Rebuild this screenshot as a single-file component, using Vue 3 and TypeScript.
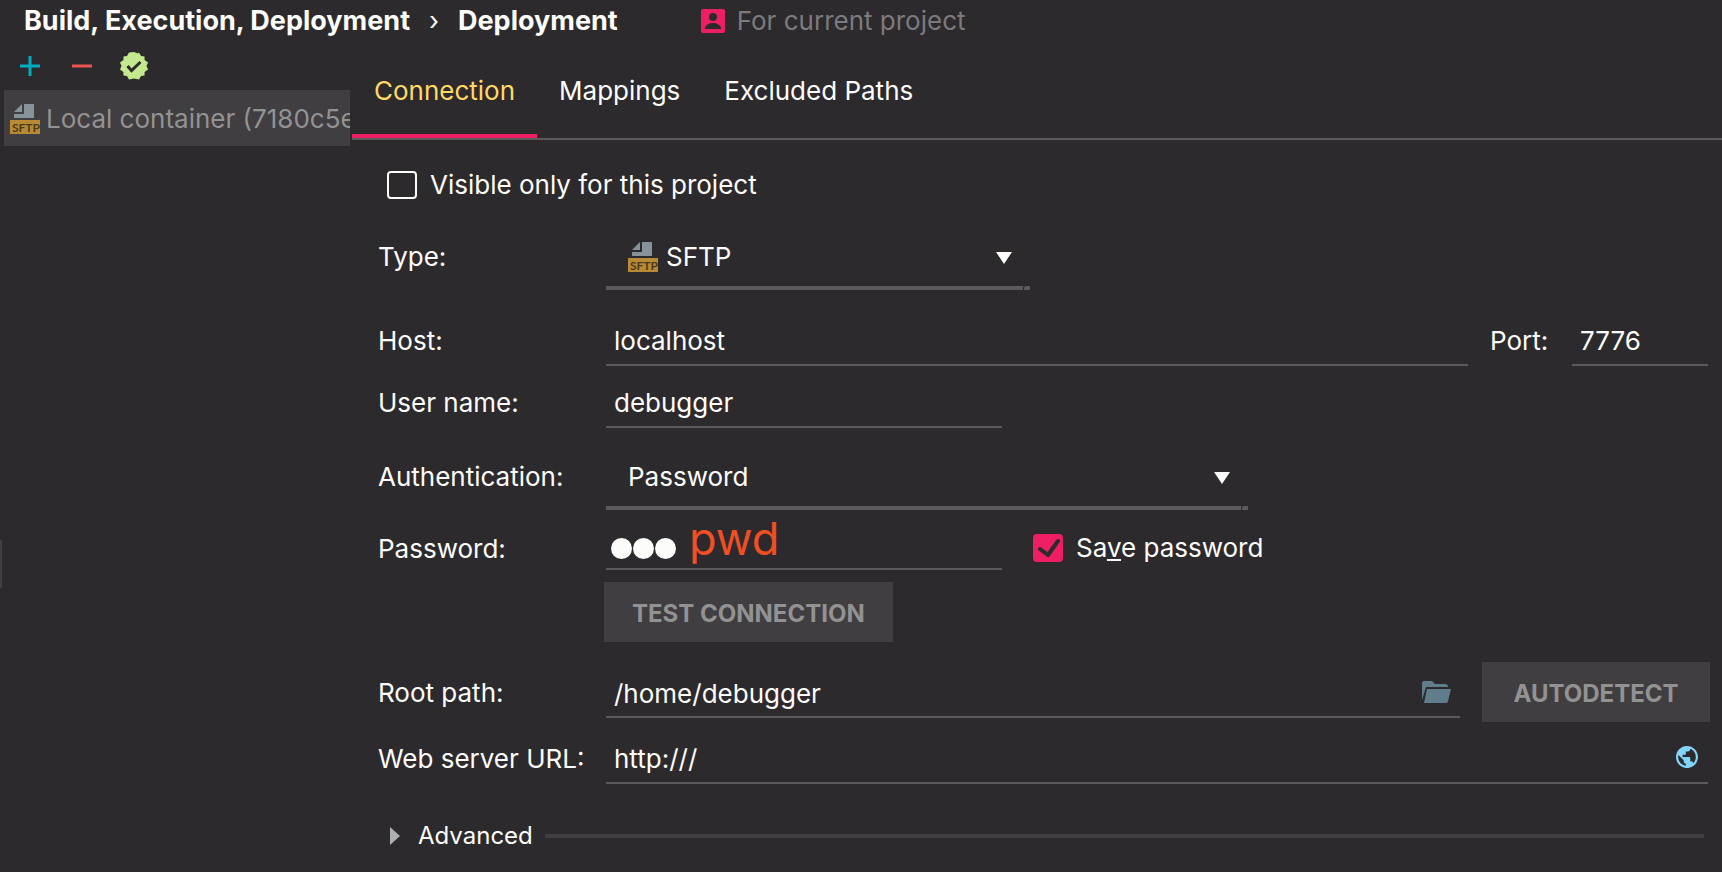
<script setup lang="ts">
import { ref } from 'vue'

const tabs = ['Connection', 'Mappings', 'Excluded Paths']
const activeTab = ref('Connection')
const onlyThisProject = ref(false)
const savePassword = ref(true)
const type = ref('SFTP')
const host = ref('localhost')
const port = ref('7776')
const user = ref('debugger')
const auth = ref('Password')
const password = ref('pwd')
const rootPath = ref('/home/debugger')
const url = ref('http:///')
</script>

<template>
  <div class="page">
    <header class="crumbs">
      <h1>Build, Execution, Deployment</h1>
      <span class="sep">›</span>
      <h1>Deployment</h1>
      <span class="scope">
        <svg width="24" height="24" viewBox="0 0 24 24" aria-hidden="true">
          <rect width="24" height="24" rx="2" fill="#ed1e63" />
          <circle cx="12" cy="8" r="4" fill="#2d2a2e" />
          <path d="M4 20v-1c0-3 5-5 8-5s8 2 8 5v1z" fill="#2d2a2e" />
        </svg>
        For current project
      </span>
    </header>

    <div class="body">
      <aside class="side">
        <div class="tools">
          <button type="button" aria-label="Add">
            <svg width="20" height="20" viewBox="0 0 20 20"><path d="M10 0v20M0 10h20" stroke="#00acc1" stroke-width="3" /></svg>
          </button>
          <button type="button" aria-label="Remove">
            <svg width="20" height="20" viewBox="0 0 20 20"><path d="M0 10h20" stroke="#ef5350" stroke-width="3" /></svg>
          </button>
          <button type="button" aria-label="Use as default">
            <svg width="28" height="28" viewBox="0 0 28 28">
              <path d="M14 0l4 1.500 1-1 2 3.400 3.500.6.100 3.500 3.400 2.500-1.500 3.500 1.500 3.500-3.400 2.500-.1 3.500-3.500.6-2 3.400-5-1-5 1-2-3.400-3.500-.6-.1-3.500L0 17.500 1.500 14 0 10.500 3.400 8l.1-3.500L7 3.900l2-3.400z" fill="#c3e88d" />
              <path d="M7.500 14l4 4.500 9-8.500" fill="none" stroke="#2d2a2e" stroke-width="3" />
            </svg>
          </button>
        </div>
        <button type="button" class="server">
          <svg width="30" height="30" viewBox="0 0 30 30" aria-hidden="true">
            <path d="M12 0v8H4zM14 0h10v14H4v-4h10z" fill="#87939a" />
            <rect y="16" width="30" height="14" fill="#b98a34" />
            <text x="2" y="28" class="tag">SFTP</text>
          </svg>
          <span>Local container (7180c5e</span>
        </button>
        <span class="handle"></span>
      </aside>

      <main class="main">
        <nav class="tabs" role="tablist">
          <button
            v-for="t in tabs"
            :key="t"
            type="button"
            role="tab"
            :aria-selected="t === activeTab"
            :class="{ active: t === activeTab }"
            @click="activeTab = t"
          >{{ t }}</button>
        </nav>

        <form class="form" @submit.prevent>
          <label class="check visible">
            <span class="box">
              <input v-model="onlyThisProject" type="checkbox" />
              <svg v-if="onlyThisProject" viewBox="0 0 30 28"><path d="M7 15l8 6L25 7" /></svg>
            </span>
            Visible only for this project
          </label>

          <div class="row">
            <label for="type">Type:</label>
            <div class="pick type">
              <svg class="lead" width="30" height="30" viewBox="0 0 30 30" aria-hidden="true">
                <path d="M12 0v8H4zM14 0h10v14H4v-4h10z" fill="#87939a" />
                <rect y="16" width="30" height="14" fill="#b98a34" />
                <text x="2" y="28" class="tag">SFTP</text>
              </svg>
              <select id="type" v-model="type"><option>SFTP</option></select>
              <svg class="arrow" width="16" height="12" viewBox="0 0 16 12"><path d="M0 0h16L8 12z" fill="#fcfcfa" /></svg>
            </div>
          </div>

          <div class="row">
            <label for="host">Host:</label>
            <input id="host" v-model="host" type="text" class="field grow" />
            <label for="port" class="port-label">Port:</label>
            <input id="port" v-model="port" type="text" class="field port" />
          </div>

          <div class="row user">
            <label for="user">User name:</label>
            <input id="user" v-model="user" type="text" class="field short" />
          </div>

          <div class="row auth-row">
            <label for="auth">Authentication:</label>
            <div class="pick auth">
              <select id="auth" v-model="auth"><option>Password</option></select>
              <svg class="arrow" width="16" height="12" viewBox="0 0 16 12"><path d="M0 0h16L8 12z" fill="#fcfcfa" /></svg>
            </div>
          </div>

          <div class="row password-row">
            <label for="password">Password:</label>
            <div class="secret short">
              <input id="password" v-model="password" type="password" class="field" />
              <span class="mask" aria-hidden="true">
                <i v-for="n in password.length" :key="n"></i>
                <span class="note">pwd</span>
              </span>
            </div>
            <label class="check save">
              <span class="box">
                <input v-model="savePassword" type="checkbox" />
                <svg v-if="savePassword" viewBox="0 0 30 28"><path d="M7 15l8 6L25 7" /></svg>
              </span>
              <span>Sa<u>v</u>e password</span>
            </label>
          </div>

          <button type="button" class="btn test">TEST CONNECTION</button>

          <div class="row root-row">
            <label for="root">Root path:</label>
            <div class="with-icon grow">
              <input id="root" v-model="rootPath" type="text" class="field tall" />
              <button type="button" class="inner folder" aria-label="Browse">
                <svg width="29" height="22" viewBox="0 0 29 22">
                  <path d="M0 19V2a2 2 0 0 1 2-2h8l3 3h10a3 3 0 0 1 3 3H4z" fill="#607d8b" />
                  <path d="M5 8h24l-3 12a2 2 0 0 1-2 2H2z" fill="#607d8b" />
                </svg>
              </button>
            </div>
            <button type="button" class="btn detect">AUTODETECT</button>
          </div>

          <div class="row url-row">
            <label for="url">Web server URL:</label>
            <div class="with-icon grow">
              <input id="url" v-model="url" type="text" class="field" />
              <button type="button" class="inner globe" aria-label="Open in browser">
                <svg width="22" height="22" viewBox="2 2 20 20">
                  <path d="M12 2C6.480 2 2 6.480 2 12s4.480 10 10 10 10-4.480 10-10S17.520 2 12 2zm-1 17.930c-3.950-.49-7-3.850-7-7.930 0-.62.080-1.210.21-1.790L9 15v1c0 1.100.9 2 2 2v1.930zm6.900-2.540c-.26-.81-1-1.390-1.900-1.390h-1v-3c0-.55-.45-1-1-1H8v-2h2c.55 0 1-.45 1-1V7h2c1.100 0 2-.9 2-2v-.41c2.930 1.190 5 4.060 5 7.410 0 2.080-.8 3.970-2.100 5.390z" fill="#81d4fa" />
                </svg>
              </button>
            </div>
          </div>

          <button type="button" class="advanced" aria-expanded="false">
            <svg width="10" height="18" viewBox="0 0 10 18"><path d="M0 0l10 9-10 9z" fill="#aeafb1" /></svg>
            <span class="name">Advanced</span>
            <span class="rule"></span>
          </button>
        </form>
      </main>
    </div>
  </div>
</template>

<style>
body {
  background: #2d2a2e;
}
</style>

<style scoped>
.page {
  min-height: 100vh;
  box-sizing: border-box;
  background: #2d2a2e;
  color: #fcfcfa;
  font: 400 26px/32px Inter, "Liberation Sans", sans-serif;
}
.page * {
  box-sizing: border-box;
}
button,
input,
select {
  margin: 0;
  padding: 0;
  border: 0;
  border-radius: 0;
  background: none;
  color: inherit;
  font: inherit;
  outline: 0;
}
svg {
  display: block;
  flex: none;
}
.tag {
  fill: #4b3a1e;
  font: 700 12px Lato, sans-serif;
}
.crumbs {
  display: flex;
  align-items: center;
  height: 42px;
  padding-left: 24px;
}
h1 {
  margin: 0;
  font-size: 27px;
  line-height: 32px;
  font-weight: 700;
}
.sep {
  width: 48px;
  text-align: center;
}
.scope {
  display: flex;
  align-items: center;
  gap: 12px;
  margin-left: 83px;
  color: #7c7a7d;
}
.body {
  display: flex;
}
.side {
  flex: none;
  width: 352px;
  padding: 0 2px 0 4px;
}
/* grip of the collapsed panel at the window's edge */
.handle {
  position: absolute;
  left: 0;
  top: 540px;
  width: 2px;
  height: 48px;
  background: #403e41;
}
.tools {
  display: flex;
  align-items: center;
  height: 48px;
  padding-left: 16px;
  gap: 32px;
}
.tools button:last-child {
  margin-left: -4px;
}
.server {
  display: flex;
  align-items: center;
  gap: 6px;
  width: 100%;
  height: 56px;
  padding: 2px 0 0 6px;
  overflow: hidden;
  background: #403e41;
  color: #939293;
  white-space: nowrap;
}
.main {
  flex: 1;
  min-width: 0;
}
.tabs {
  display: flex;
  height: 98px;
  border-bottom: 2px solid #5b595c;
}
.tabs button {
  padding: 6px 22px 0;
  border-bottom: 4px solid transparent;
}
.tabs .active {
  border-color: #ed1e63;
  color: #ffd866;
}
.form {
  display: flex;
  flex-direction: column;
  padding: 28px 14px 0 26px;
}
.check {
  display: flex;
  align-items: center;
  gap: 13px;
}
.visible {
  height: 34px;
  margin-left: 9px;
}
.box {
  position: relative;
  width: 30px;
  height: 28px;
}
.box input {
  display: block;
  width: 30px;
  height: 28px;
  appearance: none;
  border: 2px solid #fcfcfa;
  border-radius: 4px;
}
.box input:checked {
  background: #ed1e63;
  border-color: #ed1e63;
}
.box svg {
  position: absolute;
  inset: 0;
  pointer-events: none;
  fill: none;
  stroke: #2d2a2e;
  stroke-width: 4;
  stroke-linecap: round;
  stroke-linejoin: round;
}
.row {
  display: flex;
  align-items: flex-start;
  margin-top: 32px;
}
.row > label:first-child {
  flex: none;
  width: 228px;
  padding-top: 3px;
}
.row .pick,
.row .secret {
  position: relative;
  flex: none;
}
.row > .grow {
  flex: 1;
  min-width: 0;
}
.row:has(.pick) > label:first-child {
  padding-top: 7px;
}
.pick select {
  display: block;
  appearance: none;
  width: 100%;
  height: 56px;
  padding: 7px 0 13px 22px;
  border-bottom: 4px solid #5b595c;
}
.pick::after {
  content: "";
  position: absolute;
  right: 3px;
  bottom: 0;
  width: 3px;
  height: 4px;
  border-top: 1px solid #2d2a2e;
  border-left: 1px solid #2d2a2e;
  border-top-left-radius: 3px;
}
.type {
  width: 424px;
}
.pick.type select {
  padding-left: 60px;
}
.auth {
  width: 642px;
}
.lead {
  position: absolute;
  left: 22px;
  top: 8px;
}
.arrow {
  position: absolute;
  right: 18px;
  top: 18px;
  pointer-events: none;
}
.field {
  display: block;
  width: 100%;
  height: 44px;
  padding: 2px 8px 8px;
  border-bottom: 2px solid #5b595c;
}
.row > .short {
  width: 396px;
}
.row > .port {
  flex: none;
  width: 136px;
}
.port-label {
  width: 104px;
  padding: 3px 0 0 22px;
}
.row.user {
  margin-top: 18px;
}
.row.auth-row {
  margin-top: 26px;
}
.row.password-row {
  margin-top: 16px;
}
.password-row > label:first-child {
  padding-top: 7px;
}
#password {
  color: transparent;
}
.mask {
  position: absolute;
  left: 5px;
  top: 0;
  display: flex;
  align-items: center;
  gap: 1px;
  height: 44px;
  pointer-events: none;
}
.mask i {
  width: 21px;
  height: 21px;
  border-radius: 50%;
  background: #fcfcfa;
}
.note {
  margin: 0 0 18px 12px;
  color: #f04e23;
  font-size: 45px;
  line-height: 44px;
}
.save {
  height: 44px;
  margin-left: 31px;
}
.btn {
  height: 60px;
  padding-top: 3px;
  background: #403e41;
  color: #939293;
  font-size: 24px;
  font-weight: 700;
}
.test {
  align-self: flex-start;
  margin: 12px 0 0 226px;
  padding-left: 28px;
  padding-right: 28px;
}
.row.root-row {
  align-items: center;
  margin: 20px -2px 0 0;
}
.root-row > label:first-child {
  padding-top: 2px;
}
.with-icon {
  position: relative;
}
.tall {
  height: 52px;
  padding: 10px 44px 6px 8px;
}
.detect {
  width: 228px;
  margin-left: 22px;
}
.inner {
  position: absolute;
}
.folder {
  right: 9px;
  top: 15px;
}
.globe {
  right: 10px;
  top: 6px;
}
.row.url-row {
  margin-top: 18px;
}
.advanced {
  display: flex;
  align-items: center;
  height: 32px;
  margin: 36px 4px 0 12px;
  font-size: 24px;
}
.name {
  margin-left: 18px;
}
.rule {
  flex: 1;
  height: 4px;
  margin-left: 12px;
  background: #403e41;
}
</style>
